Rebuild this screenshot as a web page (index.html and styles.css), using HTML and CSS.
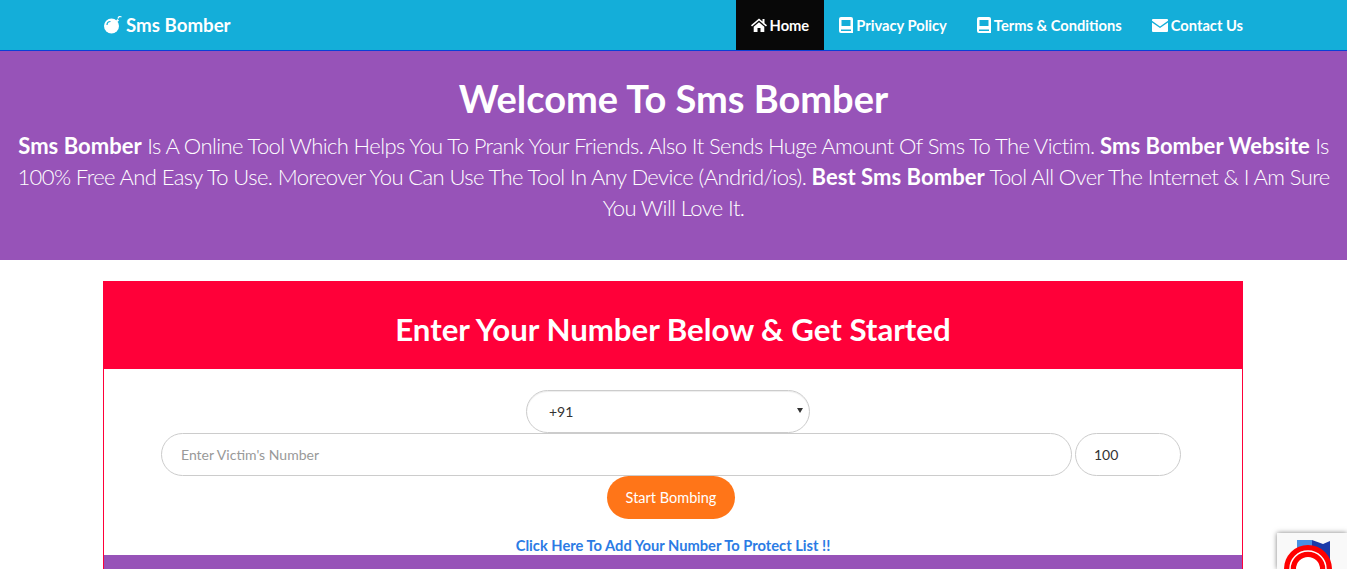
FILE: index.html
```html
<!DOCTYPE html>
<html>

<head>
    <title>Sms Bomber</title>
    <link rel="stylesheet" href="styles.css">
</head>

<body>
    <nav class="navbar">
        <div class="nav-inner">
            <a class="brand" href="#">
                <svg class="brand-icon" viewBox="0 0 20 20">
                    <circle cx="8.500" cy="12" r="7.500" fill="#fff"/>
                    <path d="M13 6.500l1.500-1.500 1.500 1.500-1.500 1.500z" fill="#fff"/>
                    <path d="M15 4.500c.5-2 2-2.500 3.500-1.500" fill="none" stroke="#fff" stroke-width="1.200"/>
                    <path d="M4 11c0-2 1.500-3.500 3.500-3.500" fill="none" stroke="#14aed9" stroke-width="1.200"/>
                </svg>
                Sms Bomber
            </a>
            <ul class="nav-links">
                <li><a class="nav-link active" href="#">
                    <svg class="nav-icon home-icon" viewBox="0 0 16 14"><path d="M8 0.500L0 7.300l1 1.200L8 2.600l7 5.900 1-1.200-2.500-2.100V1h-2v2.600zM2.700 8.800V14h3.800v-4h3v4h3.800V8.800L8 4.200z" fill="#fff"/></svg>
                    Home</a></li>
                <li><a class="nav-link" href="#">
                    <svg class="nav-icon" viewBox="0 0 14 16"><path d="M2 0h10a2 2 0 0 1 2 2v14H2a2 2 0 0 1-2-2V2a2 2 0 0 1 2-2zM2.500 3v6h9V3zM2 12.500v1.500h10v-1.500z" fill="#fff" fill-rule="evenodd"/></svg>
                    Privacy Policy</a></li>
                <li><a class="nav-link" href="#">
                    <svg class="nav-icon" viewBox="0 0 14 16"><path d="M2 0h10a2 2 0 0 1 2 2v14H2a2 2 0 0 1-2-2V2a2 2 0 0 1 2-2zM2.500 3v6h9V3zM2 12.500v1.500h10v-1.500z" fill="#fff" fill-rule="evenodd"/></svg>
                    Terms &amp; Conditions</a></li>
                <li><a class="nav-link" href="#">
                    <svg class="nav-icon mail-icon" viewBox="0 0 16 13"><path d="M1 0h14a1 1 0 0 1 1 1v.8L8 7.500 0 1.800V1a1 1 0 0 1 1-1zM0 3.500V12a1 1 0 0 0 1 1h14a1 1 0 0 0 1-1V3.500L8 9z" fill="#fff"/></svg>
                    Contact Us</a></li>
            </ul>
        </div>
    </nav>

    <header class="hero">
        <h1>Welcome To Sms Bomber</h1>
        <p><b>Sms Bomber</b> Is A Online Tool Which Helps You To Prank Your Friends. Also It Sends Huge Amount Of Sms To The Victim. <b>Sms Bomber Website</b> Is 100% Free And Easy To Use. Moreover You Can Use The Tool In Any Device (Andrid/ios). <b>Best Sms Bomber</b> Tool All Over The Internet &amp; I Am Sure You Will Love It.</p>
    </header>

    <main class="card">
        <h2 class="card-title">Enter Your Number Below &amp; Get Started</h2>
        <form class="card-form">
            <div class="country-wrap">
                <select class="field country">
                    <option>+91</option>
                </select>
            </div>
            <div class="number-row">
                <input class="field phone" type="text" placeholder="Enter Victim's Number">
                <input class="field count" type="text" value="100">
            </div>
            <button class="start" type="button">Start Bombing</button>
            <a class="protect" href="#">Click Here To Add Your Number To Protect List !!</a>
        </form>
        <div class="card-footer"></div>
    </main>

    <div class="recaptcha">
        <svg class="recaptcha-logo" viewBox="0 0 70 36">
            <path d="M20 7h15v8H20z" fill="#4a90e2"/>
            <path d="M35 7l11 4 7-3v19h-7L35 15z" fill="#1c3aa9"/>
            <circle cx="31" cy="36" r="24" fill="#f00"/>
            <circle cx="31" cy="36" r="18" fill="none" stroke="#fff" stroke-width="1.500"/>
            <circle cx="31" cy="36" r="12" fill="#fff"/>
        </svg>
    </div>
</body>

</html>
```

FILE: styles.css
```css
html, body {
    height: 569px;
    overflow: hidden;
}

body {
    margin: 0;
    font-family: "Lato", "Noto Sans", sans-serif;
    color: #fff;
    background: #fff;
}

a {
    text-decoration: none;
}

.navbar {
    background: #14aed9;
    border-bottom: 1px solid #0a3fd6;
    height: 50px;
}

.nav-inner {
    width: 1140px;
    margin-left: 103px;
    display: flex;
    justify-content: space-between;
}

.brand {
    display: flex;
    align-items: center;
    gap: 3px;
    height: 50px;
    color: #fff;
    font-size: 18.700px;
    font-weight: 700;
}

.brand-icon {
    width: 20px;
    height: 20px;
    margin-top: -3px;
}

.nav-links {
    display: flex;
    margin: 0 -15px 0 0;
    padding: 0;
    list-style: none;
}

.nav-link {
    display: flex;
    align-items: center;
    gap: 3px;
    height: 50px;
    padding: 0 15px;
    color: #fff;
    font-size: 14.700px;
    font-weight: 700;
}

.nav-link.active {
    background: #080808;
}

.nav-icon {
    width: 14px;
    height: 16px;
}

.home-icon {
    width: 16px;
    height: 14px;
}

.mail-icon {
    width: 16px;
    height: 13px;
}

.hero {
    background: #9753b8;
    height: 209px;
    padding: 0 15px;
    text-align: center;
    box-sizing: border-box;
}

.hero h1 {
    margin: 0;
    padding-top: 23px;
    font-size: 38px;
    line-height: 48px;
    font-weight: 700;
}

.hero p {
    margin: 8px 0 0;
    font-size: 22px;
    line-height: 31px;
    font-weight: 300;
    letter-spacing: -0.600px;
}

.hero b {
    font-weight: 700;
    letter-spacing: 0.050px;
}

.card {
    display: flex;
    flex-direction: column;
    width: 1140px;
    height: 288px;
    margin: 21px 0 0 103px;
    border: 1px solid #ff0039;
    border-bottom: 0;
    box-sizing: border-box;
}

.card-title {
    margin: 0;
    background: #ff0039;
    height: 87px;
    font-size: 31.200px;
    line-height: 95px;
    font-weight: 700;
    text-align: center;
}

.card-form {
    display: flex;
    flex-direction: column;
    align-items: center;
    height: 186px;
    padding-top: 21px;
    box-sizing: border-box;
}

.field {
    height: 43px;
    border: 1px solid #ccc;
    border-radius: 22px;
    box-sizing: border-box;
    background: #fff;
    font-family: "Lato", "Noto Sans", sans-serif;
    font-size: 14px;
    color: #333;
}

.country-wrap {
    position: relative;
    display: flex;
    margin-right: 10px;
}

/* the select's own arrow is hidden, this one sits over it */
.country-wrap::after {
    content: '';
    position: absolute;
    right: 7px;
    top: 18px;
    border-left: 3px solid transparent;
    border-right: 3px solid transparent;
    border-top: 5px solid #333;
}

.country {
    width: 284px;
    padding-left: 22px;
    appearance: none;
    box-shadow: inset 0 1px 1px rgba(0, 0, 0, 0.075);
}

.number-row {
    display: flex;
    gap: 3px;
    margin-right: 4px;
}

.phone {
    width: 911px;
    padding: 0 19px;
}

.phone::placeholder {
    color: #999;
}

.count {
    width: 106px;
    padding: 0 18px;
}

.start {
    width: 128px;
    height: 43px;
    border: 0;
    border-radius: 22px;
    background: #ff7518;
    color: #fff;
    font-family: "Lato", "Noto Sans", sans-serif;
    font-size: 14.500px;
    margin-right: 4px;
}

.protect {
    margin-top: 17px;
    color: #2b7be4;
    font-size: 14.700px;
    font-weight: 700;
}

.card-footer {
    flex: 1;
    background: #9753b8;
}

/* floats over the page in the corner */
.recaptcha {
    position: fixed;
    left: 1277px;
    top: 533px;
    width: 70px;
    height: 36px;
    background: #f9f9f9;
    box-shadow: 0 0 5px rgba(0, 0, 0, 0.5);
    overflow: hidden;
}

.recaptcha-logo {
    display: block;
    width: 70px;
    height: 36px;
}
```
